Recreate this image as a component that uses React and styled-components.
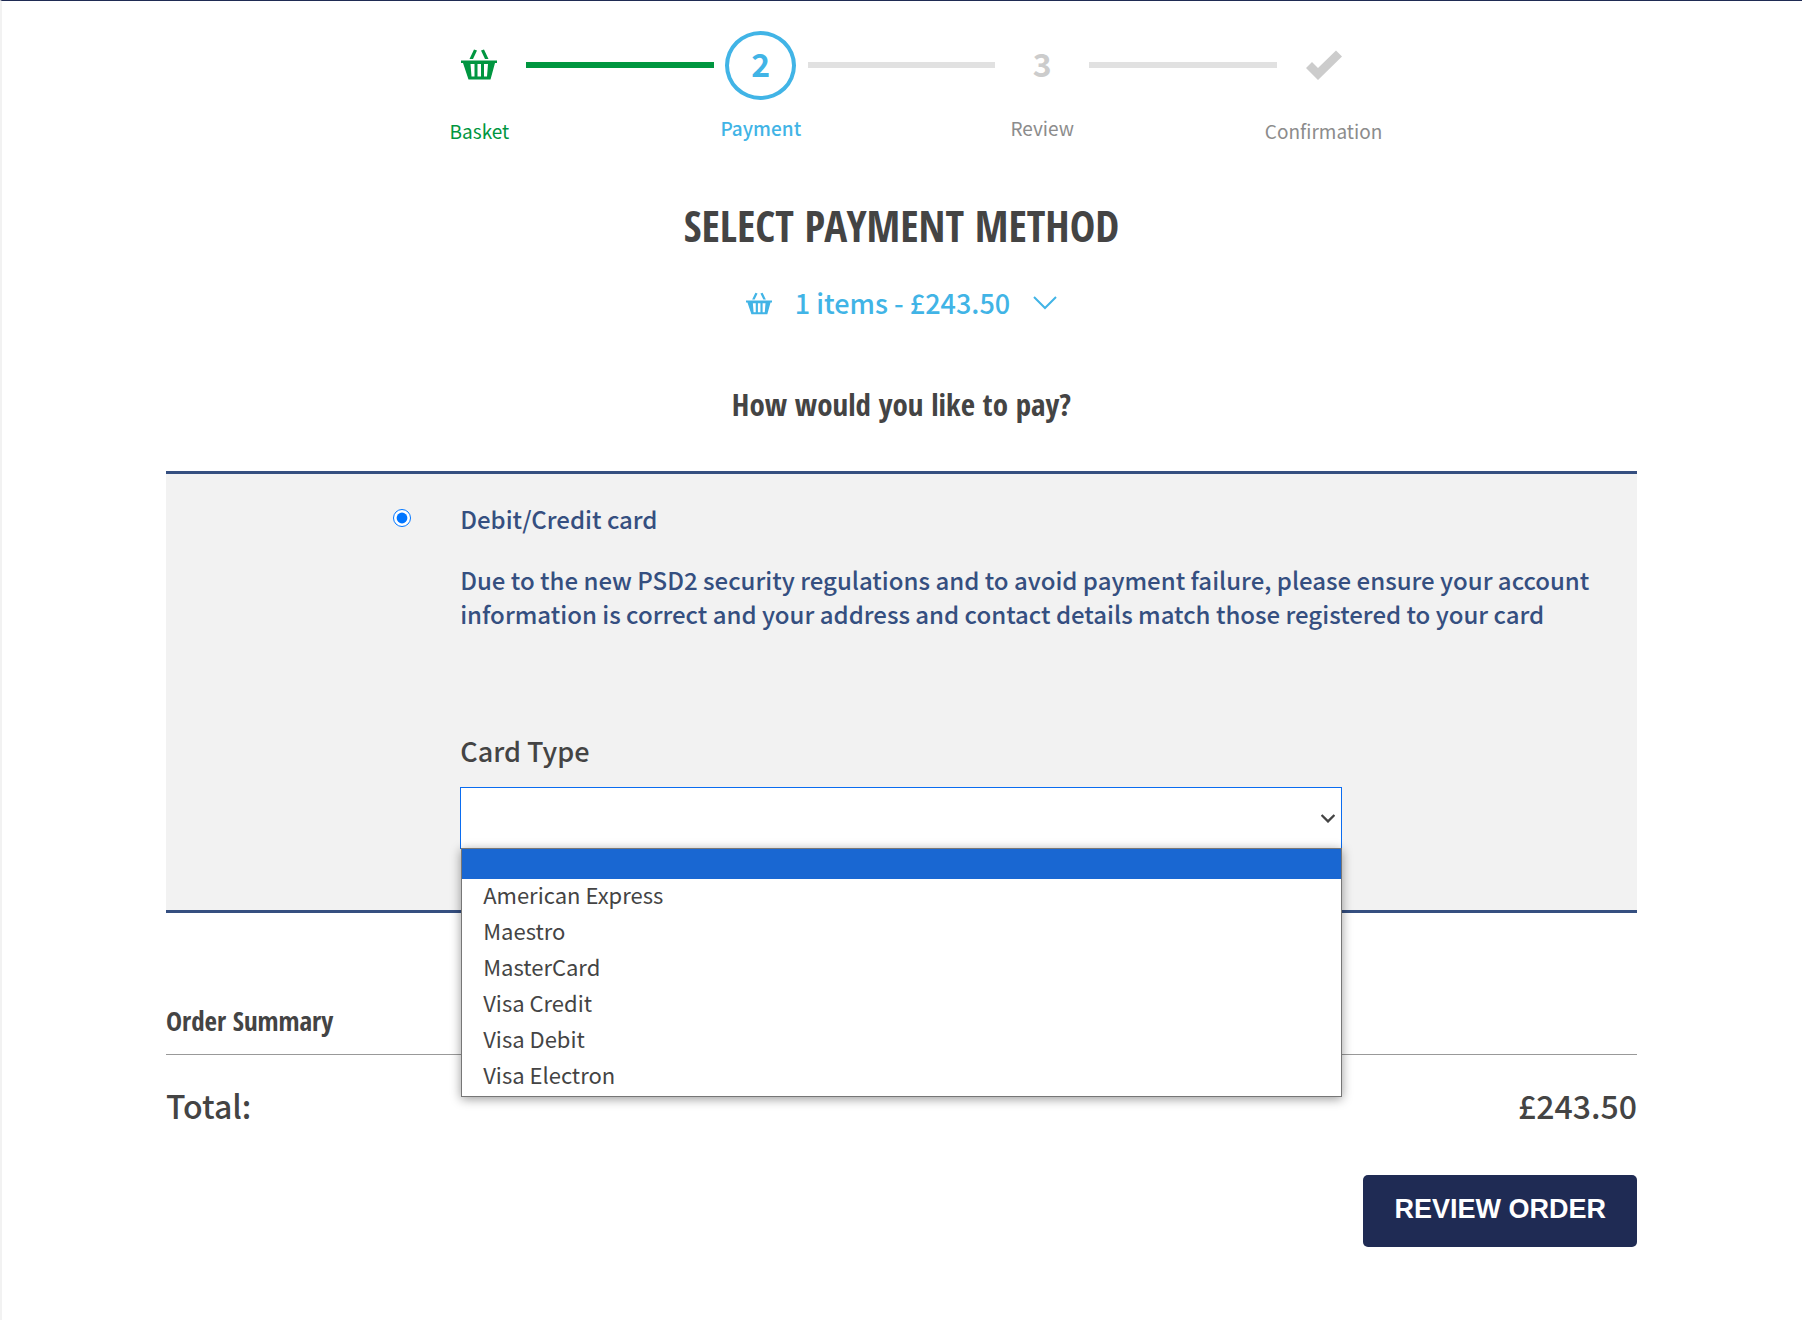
import React, { useState } from 'react';
import styled, { createGlobalStyle, css } from 'styled-components';

const cardTypes = ['American Express', 'Maestro', 'MasterCard', 'Visa Credit', 'Visa Debit', 'Visa Electron'];

const BasketIcon = ({ width, height }) => (
  <svg width={width} height={height} viewBox="0 0 36 31" fill="currentColor" aria-hidden="true">
    <path d="M13 0.500l3 1L12 10H8.500z M23 0.500l-3 1L24 10h3.500z" />
    <path
      fillRule="evenodd"
      d="M0 11.500h36v2.500h-2L29.500 30.500h-22L2 14H0z M9.500 15l1 12.500h3V15z M16.500 15v12.500h3.500V15z M23 15v12.500h3L27 15z"
    />
  </svg>
);

const TickIcon = () => (
  <svg width="36" height="30" viewBox="0 0 36 30" fill="currentColor" aria-hidden="true">
    <path d="M0 18l6-6 6 6L30 0.500l6 6L12 30z" />
  </svg>
);

const ChevronIcon = ({ width = 24, height = 14 }) => (
  <svg width={width} height={height} viewBox="0 0 24 14" fill="none" stroke="currentColor" strokeWidth={width < 20 ? 4 : 2} aria-hidden="true">
    <path d="M1 1l11 11L23 1" />
  </svg>
);

const App = () => {
  const [cardType, setCardType] = useState('');
  const [open, setOpen] = useState(true);

  const pick = (type) => {
    setCardType(type);
    setOpen(false);
  };

  return (
    <>
      <GlobalStyle />
      <Page>
        <Steps>
          <Step $state="done">
            <StepMark><BasketIcon width={36} height={31} /></StepMark>
            <StepLabel $low>Basket</StepLabel>
          </Step>
          <StepLine $done />
          <Step $state="current">
            <StepMark $number $circle>2</StepMark>
            <StepLabel>Payment</StepLabel>
          </Step>
          <StepLine />
          <Step>
            <StepMark $number>3</StepMark>
            <StepLabel>Review</StepLabel>
          </Step>
          <StepLine />
          <Step>
            <StepMark><TickIcon /></StepMark>
            <StepLabel $low>Confirmation</StepLabel>
          </Step>
        </Steps>

        <Title>SELECT PAYMENT METHOD</Title>
        <BasketToggle type="button">
          <BasketIcon width={26} height={23} />
          <span>1 items - £243.50</span>
          <ChevronIcon />
        </BasketToggle>
        <Question>How would you like to pay?</Question>

        <Panel>
          <RadioCell>
            <Radio type="radio" id="card" name="method" defaultChecked />
          </RadioCell>
          <PanelBody>
            <MethodLabel htmlFor="card">Debit/Credit card</MethodLabel>
            <Notice>
              Due to the new PSD2 security regulations and to avoid payment failure, please ensure your account
              information is correct and your address and contact details match those registered to your card
            </Notice>
            <FieldLabel htmlFor="cardType">Card Type</FieldLabel>
            <SelectWrap>
              <Select id="cardType" value={cardType} onChange={(e) => pick(e.target.value)}>
                <option value=""></option>
                {cardTypes.map((type) => <option key={type}>{type}</option>)}
              </Select>
              <SelectArrow><ChevronIcon width={14} height={9} /></SelectArrow>
              {open && (
                <Menu role="listbox" aria-label="Card Type">
                  <BlankOption role="option" aria-selected="true" onClick={() => pick('')} />
                  {cardTypes.map((type) => (
                    <MenuOption key={type} role="option" aria-selected="false" onClick={() => pick(type)}>
                      {type}
                    </MenuOption>
                  ))}
                </Menu>
              )}
            </SelectWrap>
          </PanelBody>
        </Panel>

        <SummaryTitle>Order Summary</SummaryTitle>
        <TotalRow>
          <span>Total:</span>
          <span>£243.50</span>
        </TotalRow>
        <Actions>
          <ReviewBtn type="submit">REVIEW ORDER</ReviewBtn>
        </Actions>
      </Page>
    </>
  );
};

export default App;

const GlobalStyle = createGlobalStyle`
  * {
    box-sizing: border-box;
  }
  body {
    margin: 0;
    background: #fff;
    color: #444;
    font-family: "Noto Sans CJK SC", "Noto Sans", sans-serif;
  }
`;

const headingFont = css`
  font-family: "Open Sans Condensed", "Roboto Condensed", "Liberation Sans Narrow", "Liberation Sans", sans-serif;
  font-weight: 700;
`;

const Page = styled.main`
  min-height: 100vh;
  padding: 30px 165px 72px 164px;
  border-top: 1px solid #1f2b54;
  border-left: 2px solid #f2f2f2;
`;

const Steps = styled.div`
  display: grid;
  grid-template-columns: repeat(3, minmax(0, 1fr) minmax(0, 2fr)) minmax(0, 1fr);
  max-width: 938px;
  margin: 0 auto;
`;

const stepColors = { done: '#009640', current: '#41b4e6' };

const Step = styled.div`
  display: flex;
  flex-direction: column;
  align-items: center;
  color: ${(p) => stepColors[p.$state] || '#8c8c8c'};
  font-weight: ${(p) => (p.$state === 'current' ? 500 : 400)};
`;

const StepMark = styled.div`
  display: flex;
  align-items: center;
  justify-content: center;
  width: 71px;
  height: 69px;
  padding-bottom: ${(p) => (p.$number ? 6 : 2)}px;
  border: ${(p) => (p.$circle ? '4px solid #41b4e6' : 'none')};
  border-radius: 50%;
  font-size: 32px;
  font-weight: 700;
  line-height: 1;

  ${Step}:nth-child(n + 5) & {
    color: #ccc;
  }
`;

const StepLabel = styled.div`
  margin-top: ${(p) => (p.$low ? 17 : 14)}px;
  font-size: 19px;
  line-height: 28px;
`;

const StepLine = styled.div`
  height: 6px;
  margin-top: 31px;
  background: ${(p) => (p.$done ? '#009640' : '#e1e1e1')};
`;

const Title = styled.h1`
  ${headingFont}
  margin: 51px 0 0;
  font-size: 43px;
  line-height: 60px;
  text-align: center;
`;

const BasketToggle = styled.button`
  display: flex;
  align-items: center;
  gap: 23px;
  margin: 27px auto 0;
  padding: 0;
  border: none;
  background: none;
  color: #41b4e6;
  font-family: inherit;
  font-size: 27px;
  font-weight: 500;
  line-height: 40px;
  cursor: pointer;
`;

const Question = styled.h2`
  ${headingFont}
  margin: 59px 0 0;
  font-size: 31px;
  line-height: 44px;
  text-align: center;
`;

const Panel = styled.section`
  display: grid;
  grid-template-columns: 20% 80%;
  height: 442px;
  margin-top: 45px;
  border-top: 3px solid #354f80;
  border-bottom: 3px solid #354f80;
  background: #f2f2f2;
  color: #354f80;
`;

const RadioCell = styled.div`
  display: flex;
  justify-content: flex-end;
  align-items: flex-start;
  padding: 35px 49px 0 0;
`;

const Radio = styled.input`
  width: 18px;
  height: 18px;
  margin: 0;
  accent-color: #0075ff;
`;

const PanelBody = styled.div`
  padding: 28px 16px 0 0;
  font-size: 24px;
  font-weight: 500;
  line-height: 34px;
`;

const MethodLabel = styled.label`
  display: block;
`;

const Notice = styled.p`
  margin: 27px 0 0;
`;

const FieldLabel = styled.label`
  display: block;
  margin-top: 103px;
  color: #444;
  font-size: 27px;
`;

const SelectWrap = styled.div`
  position: relative;
  width: 882px;
  max-width: 100%;
  margin-top: 19px;
`;

const Select = styled.select`
  display: block;
  width: 100%;
  height: 62px;
  padding: 0 30px 0 16px;
  border: 1px solid #0a6cf0;
  border-radius: 0;
  outline: none;
  appearance: none;
  background: #fff;
  color: #444;
  font-family: inherit;
  font-size: 22px;
`;

const SelectArrow = styled.span`
  position: absolute;
  top: 26px;
  right: 7px;
  color: #444;
  line-height: 0;
  pointer-events: none;
`;

const Menu = styled.ul`
  position: absolute;
  top: 61px;
  left: 1px;
  right: 0;
  z-index: 1;
  margin: 0;
  padding: 0 0 1px;
  border: 1px solid #767676;
  background: #fff;
  box-shadow: 0 2px 10px rgba(0, 0, 0, 0.4);
  color: #444;
  font-size: 22px;
  font-weight: 400;
  line-height: 30px;
  list-style: none;
`;

const MenuOption = styled.li`
  padding: 0 21px 6px;
`;

const BlankOption = styled.li`
  height: 30px;
  background: #1967d2;
`;

const SummaryTitle = styled.h3`
  ${headingFont}
  margin: 88px 0 0;
  padding-bottom: 13px;
  border-bottom: 1px solid #999;
  font-size: 27px;
  line-height: 40px;
`;

const TotalRow = styled.div`
  display: flex;
  justify-content: space-between;
  margin-top: 27px;
  font-size: 32px;
  font-weight: 500;
  line-height: 46px;
`;

const Actions = styled.div`
  display: flex;
  justify-content: flex-end;
  margin-top: 47px;
`;

const ReviewBtn = styled.button`
  height: 72px;
  padding: 0 31px 3px;
  border: none;
  border-radius: 5px;
  background: #1f2b54;
  color: #fff;
  font-family: "Liberation Sans", Arial, sans-serif;
  font-size: 27px;
  font-weight: 700;
  cursor: pointer;
`;
